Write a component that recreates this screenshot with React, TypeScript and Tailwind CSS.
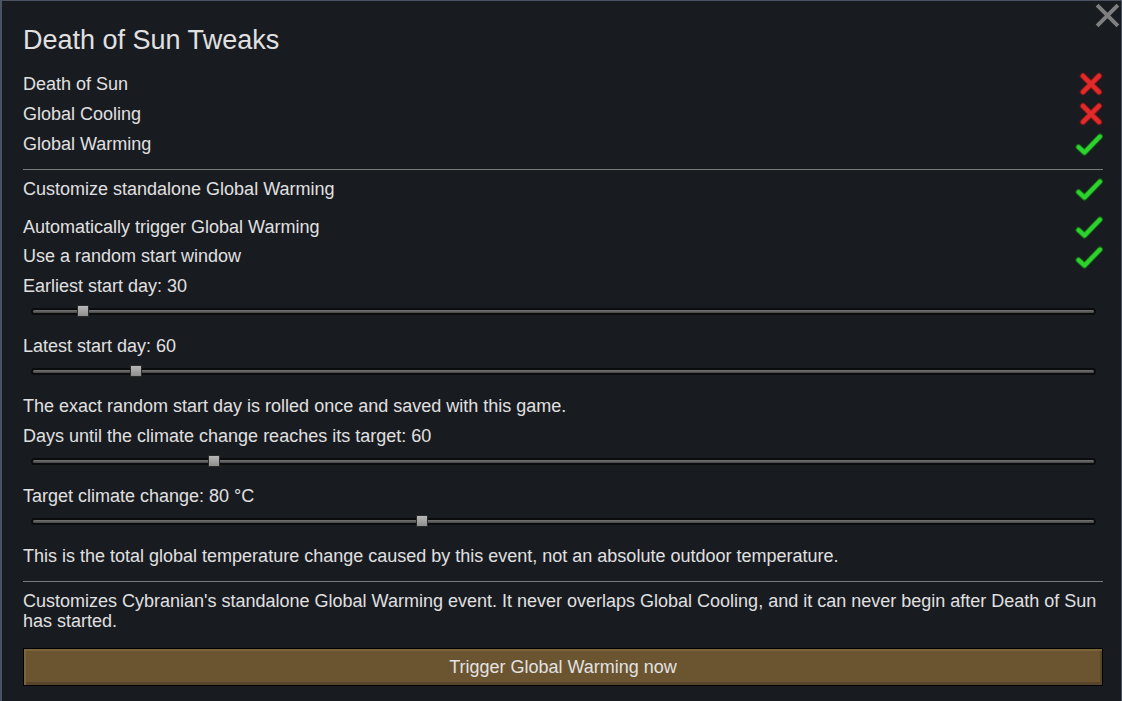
import type { ReactNode } from 'react'

const font = { fontFamily: '"Liberation Sans", Arial, sans-serif' }

function CrossIcon() {
  return (
    <svg width="24" height="24" viewBox="0 0 24 24" className="shrink-0">
      <g strokeLinecap="round" fill="none">
        <path d="M4 4 L20 20 M20 4 L4 20" stroke="#7a1515" strokeWidth="6.5" />
        <path d="M4 4 L20 20 M20 4 L4 20" stroke="#e12b2b" strokeWidth="4.5" />
      </g>
    </svg>
  )
}

function CheckIcon() {
  return (
    <svg width="28" height="24" viewBox="0 0 28 24" className="shrink-0">
      <g strokeLinecap="round" strokeLinejoin="round" fill="none">
        <path d="M3.5 15 L9.5 20.5 L25 4.5" stroke="#136e13" strokeWidth="6" />
        <path d="M3.5 15 L9.5 20.5 L25 4.5" stroke="#2ed22e" strokeWidth="4" />
      </g>
    </svg>
  )
}

function ToggleRow({ label, on, className = 'h-[30px]' }: { label: string; on: boolean; className?: string }) {
  return (
    <div className={`flex items-center justify-between ${className}`}>
      <span>{label}</span>
      {on ? <CheckIcon /> : <CrossIcon />}
    </div>
  )
}

function Line() {
  return <div className="h-px bg-[#7a7a7a]" />
}

function Slider({ label, pct }: { label: string; pct: number }) {
  return (
    <div>
      <div className="h-[30px] flex items-center">{label}</div>
      <div className="h-[20px] flex items-center pl-[8px] pr-[7px]">
        <div className="relative flex-1 h-[7px] rounded-full bg-[#0b0c0e] flex items-center px-[2px]">
          <div className="flex-1 h-[3px] rounded-full bg-gradient-to-b from-[#777] to-[#454545]" />
          <div
            className="absolute top-1/2 w-[12px] h-[12px] -mt-[6px] -ml-[6px] bg-gradient-to-b from-[#b8b8b8] to-[#8e8e8e] border border-[#2a2a2a]"
            style={{ left: `${pct}%` }}
          />
        </div>
      </div>
      <div className="h-[10px]" />
    </div>
  )
}

function Text({ children }: { children: ReactNode }) {
  return <div className="h-[30px] flex items-center">{children}</div>
}

export default function App() {
  return (
    <div
      className="relative w-[1122px] h-[701px] bg-[#181b20] border-l-2 border-t border-r border-[#4b5262] text-[#e0e0e0] text-[18px] pl-[21px] pr-[18px] overflow-hidden"
      style={font}
    >
      <svg width="25" height="25" viewBox="0 0 24 24" className="absolute top-[2px] right-[1px]">
        <path d="M2 2 L22 22 M22 2 L2 22" stroke="#7f7f7f" strokeWidth="3.8" fill="none" />
      </svg>

      <div className="pt-[24px] h-[68px] text-[27px] leading-[30px]">Death of Sun Tweaks</div>

      <ToggleRow label="Death of Sun" on={false} />
      <ToggleRow label="Global Cooling" on={false} />
      <ToggleRow label="Global Warming" on={true} />

      <div className="mt-[10px]">
        <Line />
      </div>

      <ToggleRow label="Customize standalone Global Warming" on={true} className="h-[30px] mt-[4px] mb-[8px]" />
      <ToggleRow label="Automatically trigger Global Warming" on={true} />
      <ToggleRow label="Use a random start window" on={true} className="h-[29px]" />

      <Slider label="Earliest start day: 30" pct={4.9} />
      <Slider label="Latest start day: 60" pct={9.87} />
      <Text>The exact random start day is rolled once and saved with this game.</Text>
      <Slider label="Days until the climate change reaches its target: 60" pct={17.2} />
      <Slider label="Target climate change: 80 °C" pct={36.75} />
      <Text>
        This is the total global temperature change caused by this event, not an absolute outdoor temperature.
      </Text>

      <div className="mt-[10px]">
        <Line />
      </div>

      <p className="mt-[9px] leading-[20px]">
        Customizes Cybranian's standalone Global Warming event. It never overlaps Global Cooling, and it can never
        begin after Death of Sun has started.
      </p>

      <button
        className="mt-[17px] w-full h-[38px] border border-black bg-[#6b5430] shadow-[inset_2px_2px_0_#7c6439,inset_-2px_-3px_0_#58442a] text-[#e2e2e2] text-[18px] flex items-center justify-center"
        style={font}
      >
        Trigger Global Warming now
      </button>
    </div>
  )
}
